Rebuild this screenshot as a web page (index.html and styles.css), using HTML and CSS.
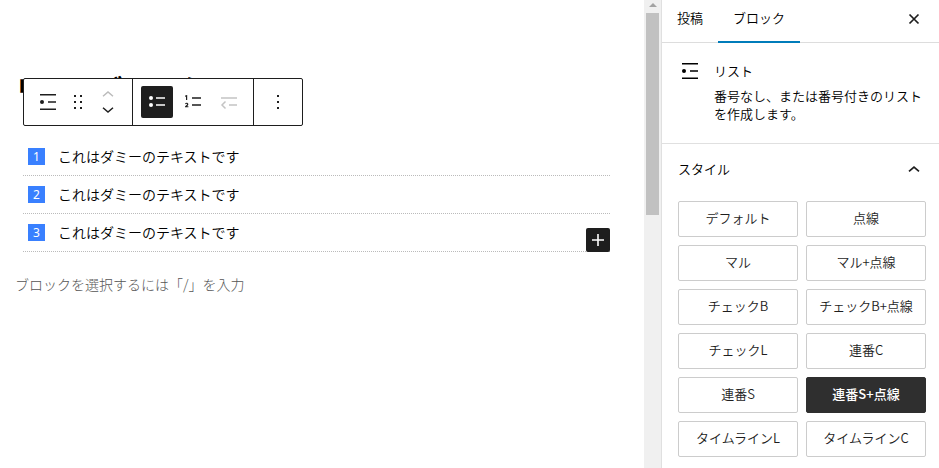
FILE: index.html
```html
<!DOCTYPE html>
<html lang="ja">
<head>
    <meta charset="UTF-8">
    <title>リストブロック</title>
    <link rel="stylesheet" href="styles.css">
</head>
<body>
    <div class="layout">
        <main class="editor">
            <h1 class="post-title">リストブロック</h1>

            <div class="toolbar">
                <div class="toolbar-group group-block">
                    <svg class="icon" viewBox="0 0 24 24"><path d="M4 4h16v1.5H4zM12 11.2h8v1.5h-8zM4 18.5h16V20H4z"/><circle cx="6" cy="12" r="2"/></svg>
                    <svg class="icon drag" viewBox="0 0 24 24"><path d="M8 5h2v2H8zM14 5h2v2h-2zM8 11h2v2H8zM14 11h2v2h-2zM8 17h2v2H8zM14 17h2v2h-2z"/></svg>
                    <div class="movers">
                        <svg class="mover off" viewBox="0 0 12 8"><path d="M1 6.2 6 2l5 4.2"/></svg>
                        <svg class="mover" viewBox="0 0 12 8"><path d="M1 1.8 6 6l5-4.2"/></svg>
                    </div>
                </div>
                <div class="toolbar-group group-list">
                    <button type="button" class="tool active">
                        <svg class="icon" viewBox="0 0 24 24"><circle cx="6" cy="8" r="2"/><circle cx="6" cy="15" r="2"/><path d="M11 7.2h9v1.6h-9zM11 14.2h9v1.6h-9z"/></svg>
                    </button>
                    <button type="button" class="tool">
                        <svg class="icon" viewBox="0 0 24 24"><path d="M11 7.2h9v1.6h-9zM11 14.2h9v1.6h-9zM5 5.3 6.2 5v5H5V6.5l-1 .3v-1zM4 13.8c.3-.7.9-1 1.6-1 1 0 1.7.6 1.7 1.4 0 .7-.4 1.1-1.3 2h1.4v1.1H4v-.8c1.5-1.3 2.1-1.8 2.1-2.2 0-.3-.2-.5-.5-.5-.4 0-.6.2-.8.5z"/></svg>
                    </button>
                    <button type="button" class="tool disabled">
                        <svg class="icon" viewBox="0 0 24 24"><path d="M4 7.2h16v1.6H4zM12 14.2h8v1.6h-8z"/><path class="stroke" d="M8.5 11.5 5 15l3.5 3.5"/></svg>
                    </button>
                </div>
                <div class="toolbar-group group-more">
                    <svg class="icon" viewBox="0 0 24 24"><path d="M11 5h2v2h-2zM11 11h2v2h-2zM11 17h2v2h-2z"/></svg>
                </div>
            </div>

            <ol class="list">
                <li><span class="num">1</span><span class="text">これはダミーのテキストです</span></li>
                <li><span class="num">2</span><span class="text">これはダミーのテキストです</span></li>
                <li><span class="num">3</span><span class="text">これはダミーのテキストです</span>
                    <button type="button" class="add-block">
                        <svg viewBox="0 0 24 24"><path d="M11.2 6h1.6v12h-1.6zM6 11.2h12v1.6H6z"/></svg>
                    </button>
                </li>
            </ol>
            <p class="placeholder">ブロックを選択するには「/」を入力</p>
        </main>

        <div class="scrollbar">
            <div class="arrow"></div>
            <div class="thumb"></div>
        </div>

        <aside class="sidebar">
            <div class="tabs">
                <div class="tab">投稿</div>
                <div class="tab current">ブロック</div>
                <svg class="close" viewBox="0 0 24 24"><path d="m7.5 7.5 9 9m0-9-9 9"/></svg>
            </div>
            <div class="card">
                <svg class="icon" viewBox="0 0 24 24"><path d="M4 4h16v1.5H4zM12 11.2h8v1.5h-8zM4 18.5h16V20H4z"/><circle cx="6" cy="12" r="2"/></svg>
                <div class="card-text">
                    <h2>リスト</h2>
                    <p>番号なし、または番号付きのリストを作成します。</p>
                </div>
            </div>
            <div class="panel-title">
                <h2>スタイル</h2>
                <svg class="chevron" viewBox="0 0 24 24"><path d="M7 14.3 12 10l5 4.3"/></svg>
            </div>
            <div class="styles">
                <button type="button">デフォルト</button>
                <button type="button">点線</button>
                <button type="button">マル</button>
                <button type="button">マル+点線</button>
                <button type="button">チェックB</button>
                <button type="button">チェックB+点線</button>
                <button type="button">チェックL</button>
                <button type="button">連番C</button>
                <button type="button">連番S</button>
                <button type="button" class="selected">連番S+点線</button>
                <button type="button">タイムラインL</button>
                <button type="button">タイムラインC</button>
            </div>
        </aside>
    </div>
</body>
</html>
```

FILE: styles.css
```css
* {
    box-sizing: border-box;
}
body {
    margin: 0;
    font-family: "Noto Sans CJK JP", sans-serif;
    font-size: 13px;
    font-weight: 300;
    color: #000;
    background-color: #fff;
    overflow: hidden;
}
h1, h2, p, ol {
    margin: 0;
    padding: 0;
}
button {
    padding: 0;
    border: none;
    background: none;
    font-family: inherit;
    font-weight: inherit;
    color: inherit;
}
svg {
    display: block;
    fill: currentColor;
}
.layout {
    display: flex;
    height: 468px;
}

/* editor */
.editor {
    position: relative;
    flex: none;
    width: 644px;
    padding: 71px 34px 0 15px;
}
.post-title {
    height: 67px;
    font-size: 27px;
    line-height: 36px;
    font-weight: bold;
    color: #000;
}
.toolbar {
    position: absolute;
    top: 78px;
    left: 23px;
    display: flex;
    width: 280px;
    height: 48px;
    border: 1px solid #1e1e1e;
    border-radius: 2px;
    background-color: #fff;
    color: #1e1e1e;
}
.toolbar-group {
    display: flex;
    align-items: center;
}
.toolbar-group + .toolbar-group {
    border-left: 1px solid #1e1e1e;
}
.group-block {
    width: 108px;
    padding-left: 12px;
}
.group-list {
    width: 121px;
    padding-left: 8px;
    gap: 4px;
}
.group-more {
    flex: 1;
    justify-content: center;
}
.icon {
    width: 24px;
    height: 24px;
    flex: none;
}
.drag {
    margin-left: 6px;
}
.movers {
    display: flex;
    flex-direction: column;
    gap: 8px;
    margin-left: 12px;
}
.mover {
    width: 12px;
    height: 8px;
    fill: none;
    stroke: #1e1e1e;
    stroke-width: 1.5;
}
.mover.off {
    stroke: #bbb;
}
.tool {
    display: flex;
    align-items: center;
    justify-content: center;
    width: 32px;
    height: 32px;
    border-radius: 2px;
}
.tool.active {
    background-color: #1e1e1e;
    color: #fff;
}
.tool.disabled {
    color: #c4c4c4;
}
.stroke {
    fill: none;
    stroke: currentColor;
    stroke-width: 1.5;
}
.list {
    margin-left: 8px;
    list-style: none;
    font-size: 14px;
    font-weight: 350;
}
.list li {
    position: relative;
    display: flex;
    align-items: center;
    height: 38px;
    padding: 0 0 1px 5px;
    border-bottom: 1px dotted #bbb;
}
.text {
    padding-bottom: 1px;
}
.num {
    width: 17px;
    height: 17px;
    margin-right: 13px;
    background-color: #3980ff;
    color: #fff;
    font-family: "Noto Sans", sans-serif;
    font-size: 12px;
    font-weight: 400;
    line-height: 17px;
    text-align: center;
}
.add-block {
    position: absolute;
    right: 0;
    bottom: -1px;
    width: 24px;
    height: 24px;
    border-radius: 2px;
    background-color: #1e1e1e;
    color: #fff;
}
.placeholder {
    margin-top: 20px;
    font-size: 14px;
    line-height: 24px;
    color: #555;
}

/* scrollbar */
.scrollbar {
    flex: none;
    width: 17px;
    padding: 3px 2px 0;
    background-color: #f0f0f0;
}
.arrow {
    width: 0;
    margin: 0 auto;
    border: 4px solid transparent;
    border-top: none;
    border-bottom-color: #a3a3a3;
}
.thumb {
    height: 202px;
    margin-top: 6px;
    background-color: #c1c1c1;
}

/* sidebar */
.sidebar {
    flex: 1;
    min-width: 0;
    border-left: 1px solid #e0e0e0;
    font-weight: 350;
}
.tabs {
    display: flex;
    height: 43px;
    border-bottom: 1px solid #ddd;
}
.tab {
    width: 56px;
    height: 43px;
    line-height: 35px;
    text-align: center;
}
.tab.current {
    width: 82px;
    border-bottom: 2px solid #007cba;
}
.close {
    width: 24px;
    height: 24px;
    margin: 7px 13px 0 auto;
    fill: none;
    stroke: #1e1e1e;
    stroke-width: 1.7;
}
.card {
    display: flex;
    gap: 12px;
    height: 101px;
    padding: 16px;
    border-bottom: 1px solid #e0e0e0;
}
.card-text {
    width: 212px;
    flex: none;
}
.card h2 {
    font-size: 13px;
    font-weight: inherit;
    line-height: 24px;
}
.card p {
    margin-top: 4px;
    line-height: 18px;
}
.panel-title {
    display: flex;
    align-items: center;
    justify-content: space-between;
    height: 50px;
    padding: 0 13px 0 16px;
}
.panel-title h2 {
    padding-bottom: 2px;
    font-size: 13px;
    font-weight: inherit;
}
.chevron {
    width: 24px;
    height: 24px;
    fill: none;
    stroke: #1e1e1e;
    stroke-width: 1.7;
}
.styles {
    display: grid;
    grid-template-columns: 120px 120px;
    gap: 8px;
    padding: 7px 16px 0;
}
.styles button {
    height: 36px;
    padding-bottom: 3px;
    border: 1px solid #ccc;
    border-radius: 2px;
    font-size: 13px;
    color: #1e1e1e;
}
.styles .selected {
    border-color: #2f2f2f;
    background-color: #2f2f2f;
    color: #fff;
    font-weight: 500;
}
```
